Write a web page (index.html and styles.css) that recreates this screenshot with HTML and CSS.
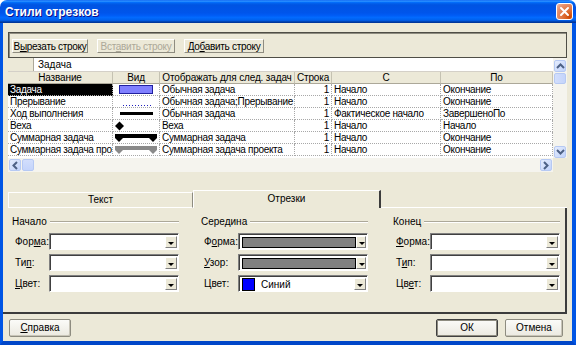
FILE: index.html
```html
<!DOCTYPE html>
<html lang="ru">
<head>
    <meta charset="UTF-8">
    <title>Стили отрезков</title>
    <link rel="stylesheet" href="styles.css">
</head>
<body>
<div class="window">
    <div class="titlebar">
        <span class="title">Стили отрезков</span>
        <span class="close">
            <svg width="15" height="15" viewBox="0 0 15 15"><path d="M4 4 L11 11 M11 4 L4 11" stroke="#fff" stroke-width="2" stroke-linecap="round"/></svg>
        </span>
    </div>
    <div class="client">
        <div class="toolbar">
            <button class="tbtn cut">В<u>ы</u>резать строку</button>
            <button class="tbtn paste disabled">Вст<u>а</u>вить строку</button>
            <button class="tbtn add">До<u>б</u>авить строку</button>
        </div>

        <div class="grid">
            <div class="grid-main">
                <div class="editrow">
                    <div class="editcorner"></div>
                    <div class="editfield">Задача</div>
                </div>
                <div class="row head">
                    <div class="cell">Название</div>
                    <div class="cell">Вид</div>
                    <div class="cell">Отображать для след. задач</div>
                    <div class="cell">Строка</div>
                    <div class="cell">С</div>
                    <div class="cell">По</div>
                </div>
                <div class="row">
                    <div class="cell selected">Задача</div>
                    <div class="cell look"><svg width="46" height="11"><rect x="6.5" y="1.5" width="33" height="8" fill="#8080ff" stroke="#2020a0"/></svg></div>
                    <div class="cell">Обычная задача</div>
                    <div class="cell num">1</div>
                    <div class="cell">Начало</div>
                    <div class="cell">Окончание</div>
                </div>
                <div class="row">
                    <div class="cell">Прерывание</div>
                    <div class="cell look"><svg width="46" height="11"><line x1="10" y1="9.5" x2="40" y2="9.5" stroke="#2020c0" stroke-dasharray="1 2"/></svg></div>
                    <div class="cell">Обычная задача;Прерывание</div>
                    <div class="cell num">1</div>
                    <div class="cell">Начало</div>
                    <div class="cell">Окончание</div>
                </div>
                <div class="row">
                    <div class="cell">Ход выполнения</div>
                    <div class="cell look"><svg width="46" height="11"><rect x="7" y="4" width="33" height="3" fill="#000"/></svg></div>
                    <div class="cell">Обычная задача</div>
                    <div class="cell num">1</div>
                    <div class="cell">Фактическое начало</div>
                    <div class="cell">ЗавершеноПо</div>
                </div>
                <div class="row">
                    <div class="cell">Веха</div>
                    <div class="cell look"><svg width="46" height="11"><path d="M6.5 1.5 L11 6 L6.5 10.5 L2 6 Z" fill="#000"/></svg></div>
                    <div class="cell">Веха</div>
                    <div class="cell num">1</div>
                    <div class="cell">Начало</div>
                    <div class="cell">Начало</div>
                </div>
                <div class="row">
                    <div class="cell">Суммарная задача</div>
                    <div class="cell look"><svg width="46" height="11"><path d="M2 2 H44 V6 L40 10 L36 6 H10 L6 10 L2 6 Z" fill="#000"/></svg></div>
                    <div class="cell">Суммарная задача</div>
                    <div class="cell num">1</div>
                    <div class="cell">Начало</div>
                    <div class="cell">Окончание</div>
                </div>
                <div class="row">
                    <div class="cell">Суммарная задача проекта</div>
                    <div class="cell look"><svg width="46" height="11"><path d="M2 2 H44 V6 L40 10 L36 6 H10 L6 10 L2 6 Z" fill="#8a8a8a"/></svg></div>
                    <div class="cell">Суммарная задача проекта</div>
                    <div class="cell num">1</div>
                    <div class="cell">Начало</div>
                    <div class="cell">Окончание</div>
                </div>
            </div>
            <div class="vscroll">
                <div class="sbtn"><svg width="9" height="6"><path d="M1 5 L4.5 1.5 L8 5" fill="none" stroke="#4d6185" stroke-width="2"/></svg></div>
                <div class="thumb"></div>
                <div class="track"></div>
                <div class="sbtn"><svg width="9" height="6"><path d="M1 1 L4.5 4.5 L8 1" fill="none" stroke="#4d6185" stroke-width="2"/></svg></div>
            </div>
            <div class="hscroll">
                <div class="sbtn"><svg width="6" height="9"><path d="M5 1 L1.5 4.5 L5 8" fill="none" stroke="#4d6185" stroke-width="2"/></svg></div>
                <div class="thumb"></div>
                <div class="track"></div>
                <div class="sbtn"><svg width="6" height="9"><path d="M1 1 L4.5 4.5 L1 8" fill="none" stroke="#4d6185" stroke-width="2"/></svg></div>
            </div>
            <div class="sizebox"></div>
        </div>

        <div class="tabs">
            <div class="tab">Текст</div>
            <div class="tab active">Отрезки</div>
            <div class="tab-rest"></div>
        </div>

        <div class="tabpanel">
            <div class="group g1">
                <div class="group-title">Начало</div>
                <div class="field">
                    <label>Фор<u>м</u>а:</label>
                    <div class="combo"><div class="combo-value"></div><div class="drop"></div></div>
                </div>
                <div class="field">
                    <label>Ти<u>п</u>:</label>
                    <div class="combo"><div class="combo-value"></div><div class="drop"></div></div>
                </div>
                <div class="field">
                    <label><u>Ц</u>вет:</label>
                    <div class="combo"><div class="combo-value"></div><div class="drop"></div></div>
                </div>
            </div>
            <div class="group g2">
                <div class="group-title">Середина</div>
                <div class="field">
                    <label>Ф<u>о</u>рма:</label>
                    <div class="combo"><div class="combo-value"><span class="swatch-bar"></span></div><div class="drop"></div></div>
                </div>
                <div class="field">
                    <label><u>У</u>зор:</label>
                    <div class="combo"><div class="combo-value"><span class="swatch-bar"></span></div><div class="drop"></div></div>
                </div>
                <div class="field">
                    <label>Цвет:</label>
                    <div class="combo"><div class="combo-value"><span class="swatch-blue"></span>Синий</div><div class="drop"></div></div>
                </div>
            </div>
            <div class="group g3">
                <div class="group-title">Конец</div>
                <div class="field">
                    <label><u>Ф</u>орма:</label>
                    <div class="combo"><div class="combo-value"></div><div class="drop"></div></div>
                </div>
                <div class="field">
                    <label>Т<u>и</u>п:</label>
                    <div class="combo"><div class="combo-value"></div><div class="drop"></div></div>
                </div>
                <div class="field">
                    <label>Цв<u>е</u>т:</label>
                    <div class="combo"><div class="combo-value"></div><div class="drop"></div></div>
                </div>
            </div>
        </div>

        <div class="footer">
            <button class="btn help"><u>С</u>правка</button>
            <div class="spacer"></div>
            <button class="btn ok">ОК</button>
            <button class="btn cancel">Отмена</button>
        </div>
    </div>
</div>
</body>
</html>
```

FILE: styles.css
```css
body { margin: 0; background: #fff; font-family: "Liberation Sans", Arial, sans-serif; font-size: 10px; color: #000; }
u { text-decoration: underline; }

.window { width: 576px; height: 345px; display: flex; flex-direction: column; }

.titlebar { height: 23px; display: flex; align-items: center; justify-content: space-between; padding: 0 3px 0 5px; box-sizing: border-box; border-radius: 7px 7px 0 0;
    background: linear-gradient(#0058ee 0%, #3593ff 4%, #288eff 6%, #127dff 8%, #036ffc 10%, #0262ee 14%, #0057e5 20%, #0054e3 24%, #0055eb 56%, #005bf5 66%, #026afe 76%, #0062ef 86%, #0052d6 92%, #0040ab 94%, #003092 100%); }
.title { color: #fff; font-weight: bold; font-size: 12px; text-shadow: 1px 1px #0f1089; }
.close { width: 17px; height: 17px; box-sizing: border-box; border: 1px solid #fff; border-radius: 3px; display: flex; align-items: center; justify-content: center;
    background: radial-gradient(circle at 85% 85%, #cc4600 0%, #dc6527 25%, #e58e6a 70%, #f0b8a5 100%); }

.client { flex: 1; background: #ece9d8; border-left: 3px solid #0055e5; border-right: 4px solid #0055e5; border-bottom: 4px solid #0046c8; padding: 9px 5px 0 5px; display: flex; flex-direction: column; }

.toolbar { height: 26px; box-sizing: border-box; border: 1px solid #4f4e46; box-shadow: inset 1px 1px 0 #8e8c80; display: flex; align-items: center; gap: 9px; padding: 2px 0 0 3px; }
.tbtn { height: 14px; padding: 0; font-family: inherit; font-size: 10px; letter-spacing: -0.3px; white-space: nowrap; background: #ece9d8; border: 1px solid; border-color: #fff #8e8c80 #8e8c80 #fff; line-height: 11px; color: #000; }
.tbtn.cut { width: 76px; }
.tbtn.paste { width: 78px; }
.tbtn.add { width: 80px; }
.tbtn.disabled { color: #aca899; }

.grid { display: grid; grid-template-columns: 545px 14px; grid-template-rows: 100px 14px; }
.grid-main { background: #fff; overflow: hidden; }
.editrow { height: 14px; display: flex; border-bottom: 1px solid #d4d0c8; box-sizing: border-box; }
.editcorner { width: 25px; background: #ece9d8; border-right: 1px solid #aca899; }
.editfield { padding-left: 4px; line-height: 13px; }

.row { display: grid; grid-template-columns: 105px 47px 135px 37px 109px 112px; height: 12px; }
.cell { box-sizing: border-box; border-right: 1px dotted #a8a8a8; border-bottom: 1px dotted #a8a8a8; padding: 0 2px 0 2px; line-height: 11px; letter-spacing: -0.3px; white-space: nowrap; overflow: hidden; }
.head .cell { background: #ece9d8; text-align: center; border-right: 1px solid #c5c2b2; border-bottom: 1px solid #aca899; padding: 0; letter-spacing: -0.15px; }
.cell.selected { background: #000; color: #fff; }
.cell.num { text-align: right; }
.cell.look { padding: 0; }
.cell.look svg { display: block; }

.vscroll { grid-row: 1; grid-column: 2; display: flex; flex-direction: column; background: #f5f4ee; padding-top: 2px; }
.hscroll { grid-row: 2; grid-column: 1; display: flex; background: #f5f4ee; padding-top: 1px; }
.sizebox { background: #ece9d8; }
.sbtn { width: 12px; height: 12px; box-sizing: border-box; border: 1px solid #b6c9f3; border-radius: 2px; background: linear-gradient(135deg, #e4ecfd, #c1d3fb); display: flex; align-items: center; justify-content: center; margin: 0 auto; }
.hscroll .sbtn { margin: 0 1px; }
.vscroll .thumb { height: 11px; width: 12px; margin: 1px auto 0; box-sizing: border-box; border: 1px solid #b6c9f3; border-radius: 2px; background: linear-gradient(90deg, #d2defc, #c4d4fb); }
.hscroll .thumb { width: 12px; height: 12px; box-sizing: border-box; border: 1px solid #b6c9f3; border-radius: 2px; background: linear-gradient(#d2defc, #c4d4fb); }
.track { flex: 1; }

.tabs { display: flex; margin-top: 18px; height: 18px; align-items: flex-end; }
.tab { width: 185px; height: 16px; box-sizing: border-box; border-top: 1px solid #fff; border-left: 1px solid #fff; border-right: 1px solid #8e8c80; border-bottom: 1px solid #fff; text-align: center; line-height: 14px; }
.tab.active { width: 188px; height: 18px; border-bottom: none; border-right: 2px solid #3c3c3c; line-height: 16px; }
.tab-rest { flex: 1; border-bottom: 1px solid #fff; }

.tabpanel { height: 106px; margin-left: -5px; padding: 0 0 0 9px; box-sizing: border-box; border-right: 2px solid #3c3c3c; border-bottom: 2px solid #3c3c3c; display: flex; }
.group { width: 167px; }
.g1 { margin-right: 22px; }
.g2 { margin-right: 25px; }
.group-title { display: flex; align-items: center; gap: 3px; height: 13px; margin-top: 7px; margin-bottom: 5px; }
.group-title::after { content: ""; flex: 1; height: 0; border-top: 1px solid #aca899; border-bottom: 1px solid #fff; }
.field { display: flex; align-items: center; justify-content: space-between; height: 17px; margin-bottom: 4px; padding-left: 3px; }
.combo { width: 130px; height: 17px; box-sizing: border-box; border: 1px solid; border-color: #808080 #fff #fff #808080; box-shadow: inset 1px 1px 0 #404040; background: #fff; display: flex; }
.combo-value { flex: 1; display: flex; align-items: center; padding: 2px 0 0 3px; gap: 6px; }
.swatch-bar { width: 112px; height: 9px; background: #808080; border: 1px solid #000; }
.swatch-blue { width: 11px; height: 11px; background: #0000ff; border: 1px solid #000; margin-top: -1px; }
.drop { width: 12px; margin: 2px 1px 1px 0; box-sizing: border-box; background: #ece9d8; border: 1px solid; border-color: #fff #808080 #808080 #fff; position: relative; }
.drop::after { content: ""; position: absolute; left: 2px; top: 5px; border-left: 3px solid transparent; border-right: 3px solid transparent; border-top: 3px solid #000; }

.footer { flex: 1; display: flex; align-items: center; padding: 0 4px 0 1px; gap: 7px; }
.spacer { flex: 1; }
.btn { height: 18px; font-family: inherit; font-size: 10px; color: #000; background: linear-gradient(#fbfbf8, #ebe9e0); border: 1px solid #8e8c80; border-radius: 2px; box-shadow: inset -1px -1px 0 #c8c5b8; padding: 0; }
.help { width: 62px; }
.ok { width: 62px; border-color: #404040; box-shadow: inset 0 0 0 1px #8e8c80; }
.cancel { width: 58px; }
```
